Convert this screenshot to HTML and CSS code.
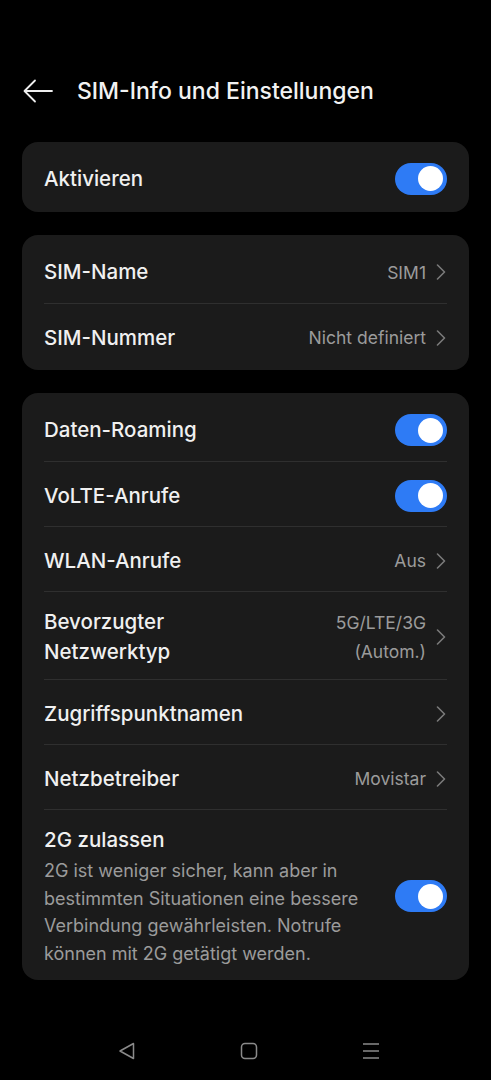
FILE: index.html
```html
<!DOCTYPE html>
<html lang="de">
    <head>
        <meta charset="UTF-8">
        <meta name="viewport" content="width=device-width, initial-scale=1.0">
        <title>SIM-Info und Einstellungen</title>
        <link rel="stylesheet" href="styles.css">
    </head>
    <body>
        <div class="header">
            <svg class="back" width="30" height="24" viewBox="0 0 30 24">
                <path d="M29 12H2M12 1.5L1.5 12L12 22.5" fill="none" stroke="#eeeeee" stroke-width="1.8" stroke-linecap="round" stroke-linejoin="round"/>
            </svg>
            <h1>SIM-Info und Einstellungen</h1>
        </div>

        <div class="card single">
            <div class="row">
                <span class="label">Aktivieren</span>
                <span class="toggle"><span class="knob"></span></span>
            </div>
        </div>

        <div class="card">
            <div class="row">
                <span class="label">SIM-Name</span>
                <span class="value">SIM1</span>
                <svg class="chev" width="10" height="16" viewBox="0 0 10 16"><path d="M1.5 1L8.5 8L1.5 15" fill="none" stroke="#7a7a7a" stroke-width="1.6" stroke-linecap="round" stroke-linejoin="round"/></svg>
            </div>
            <div class="row">
                <span class="label">SIM-Nummer</span>
                <span class="value">Nicht definiert</span>
                <svg class="chev" width="10" height="16" viewBox="0 0 10 16"><path d="M1.5 1L8.5 8L1.5 15" fill="none" stroke="#7a7a7a" stroke-width="1.6" stroke-linecap="round" stroke-linejoin="round"/></svg>
            </div>
        </div>

        <div class="card">
            <div class="row">
                <span class="label">Daten-Roaming</span>
                <span class="toggle"><span class="knob"></span></span>
            </div>
            <div class="row">
                <span class="label">VoLTE-Anrufe</span>
                <span class="toggle"><span class="knob"></span></span>
            </div>
            <div class="row">
                <span class="label">WLAN-Anrufe</span>
                <span class="value">Aus</span>
                <svg class="chev" width="10" height="16" viewBox="0 0 10 16"><path d="M1.5 1L8.5 8L1.5 15" fill="none" stroke="#7a7a7a" stroke-width="1.6" stroke-linecap="round" stroke-linejoin="round"/></svg>
            </div>
            <div class="row tall">
                <span class="label">Bevorzugter<br>Netzwerktyp</span>
                <span class="value">5G/LTE/3G<br>(Autom.)</span>
                <svg class="chev" width="10" height="16" viewBox="0 0 10 16"><path d="M1.5 1L8.5 8L1.5 15" fill="none" stroke="#7a7a7a" stroke-width="1.6" stroke-linecap="round" stroke-linejoin="round"/></svg>
            </div>
            <div class="row">
                <span class="label">Zugriffspunktnamen</span>
                <span class="value"></span>
                <svg class="chev" width="10" height="16" viewBox="0 0 10 16"><path d="M1.5 1L8.5 8L1.5 15" fill="none" stroke="#7a7a7a" stroke-width="1.6" stroke-linecap="round" stroke-linejoin="round"/></svg>
            </div>
            <div class="row">
                <span class="label">Netzbetreiber</span>
                <span class="value">Movistar</span>
                <svg class="chev" width="10" height="16" viewBox="0 0 10 16"><path d="M1.5 1L8.5 8L1.5 15" fill="none" stroke="#7a7a7a" stroke-width="1.6" stroke-linecap="round" stroke-linejoin="round"/></svg>
            </div>
            <div class="row desc-row">
                <div class="text">
                    <span class="label">2G zulassen</span>
                    <p class="desc">2G ist weniger sicher, kann aber in bestimmten Situationen eine bessere Verbindung gewährleisten. Notrufe können mit 2G getätigt werden.</p>
                </div>
                <span class="toggle"><span class="knob"></span></span>
            </div>
        </div>

        <div class="navbar">
            <svg width="18" height="18" viewBox="0 0 18 18"><path d="M15.5 1.5V16.5L2 9Z" fill="none" stroke="#8a8a8a" stroke-width="1.5" stroke-linejoin="round"/></svg>
            <svg width="18" height="18" viewBox="0 0 18 18"><rect x="1.5" y="1.5" width="15" height="15" rx="3.5" fill="none" stroke="#8a8a8a" stroke-width="1.5"/></svg>
            <svg width="18" height="18" viewBox="0 0 18 18"><path d="M1 2H17M1 9H17M1 16H17" fill="none" stroke="#8a8a8a" stroke-width="1.5"/></svg>
        </div>
    </body>
</html>
```

FILE: styles.css
```css
body {
    margin: 0;
    padding: 0 22px;
    background-color: #000000;
    color: #f0f0f0;
    font-family: Inter, Roboto, "Noto Sans", sans-serif;
}

.header {
    display: flex;
    align-items: center;
    height: 50px;
    margin-top: 66px;
    padding-left: 1px;
}

.back {
    margin-right: 24px;
}

h1 {
    margin: 0;
    font-size: 23px;
    font-weight: 500;
    color: #f2f2f2;
}

.card {
    background-color: #1b1b1b;
    border-radius: 16px;
    padding: 3px 22px 2px;
    margin-top: 23px;
}

.card.single {
    margin-top: 26px;
    padding: 3px 22px;
}

.row {
    display: flex;
    align-items: center;
    min-height: 65px;
    padding-top: 3px;
    box-sizing: border-box;
    border-top: 1px solid #2f2f2f;
}

.row:first-child {
    border-top: none;
}

.card.single .row {
    min-height: 64px;
}

.row.tall {
    min-height: 88px;
}

.label {
    font-size: 20.5px;
    font-weight: 500;
    line-height: 30px;
    color: #f0f0f0;
}

.value {
    margin-left: auto;
    font-size: 17.5px;
    line-height: 29px;
    color: #9b9b9b;
    text-align: right;
}

.chev {
    margin-left: 10px;
    margin-right: 1px;
}

.toggle {
    margin-left: auto;
    width: 52px;
    height: 32px;
    border-radius: 16px;
    background-color: #2e7bf5;
    display: flex;
    align-items: center;
    justify-content: flex-end;
    padding-right: 4px;
    box-sizing: border-box;
    flex-shrink: 0;
}

.knob {
    width: 25px;
    height: 25px;
    border-radius: 50%;
    background-color: #ffffff;
}

.desc-row {
    padding: 15px 0 11px;
}

.desc-row .text {
    width: 330px;
}

.desc {
    margin: 2px 0 0;
    font-size: 18px;
    line-height: 27.5px;
    color: #9b9b9b;
}

.navbar {
    display: flex;
    gap: 104px;
    padding-left: 96px;
    margin-top: 62px;
}
```
